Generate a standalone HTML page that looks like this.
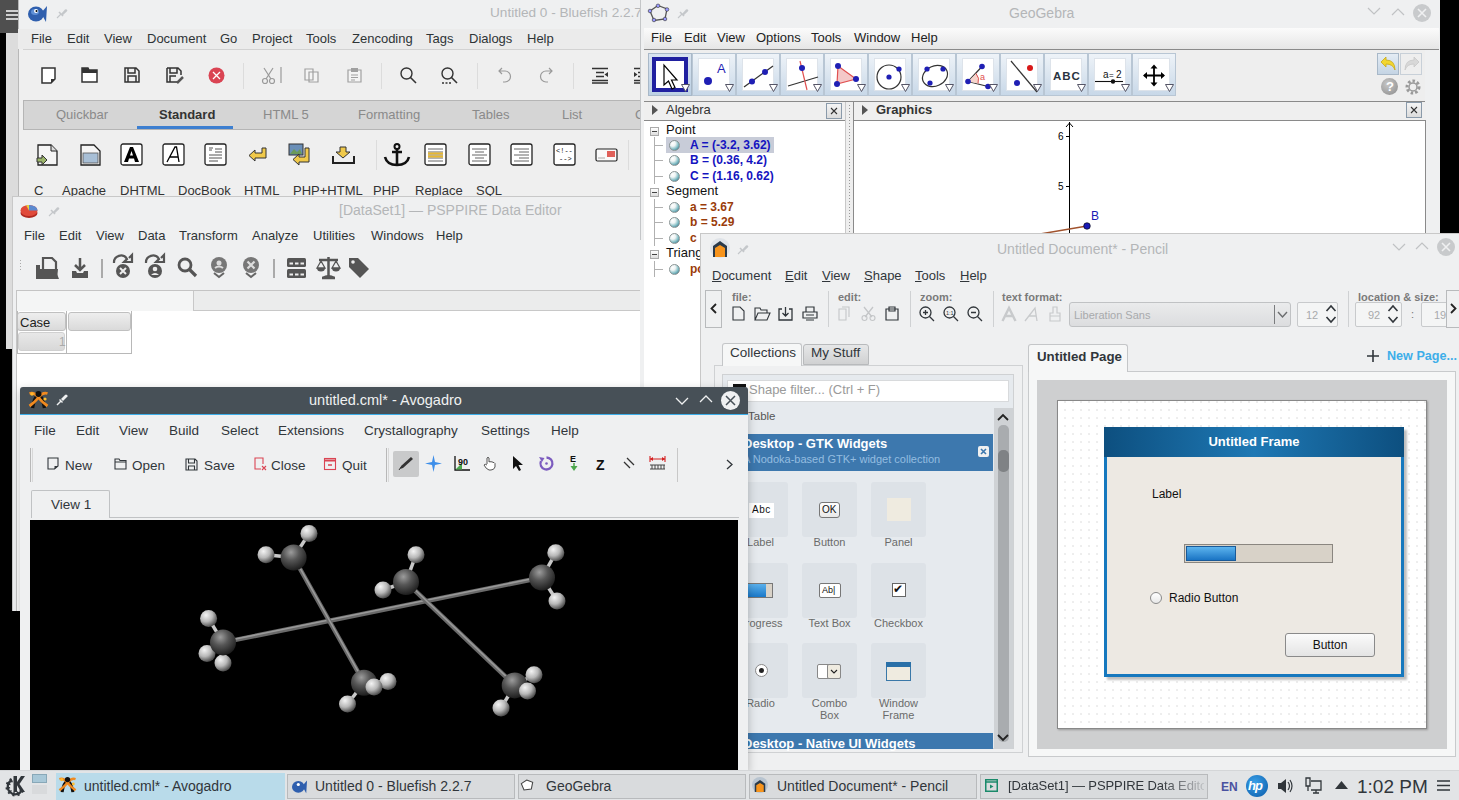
<!DOCTYPE html>
<html><head><meta charset="utf-8">
<style>
*{box-sizing:border-box;margin:0;padding:0}
html,body{width:1459px;height:800px;overflow:hidden;background:#000;-webkit-font-smoothing:antialiased;font-family:"Liberation Sans",sans-serif;color:#232627}
.a{position:absolute}
.win{position:absolute;overflow:hidden;background:#eff0f1}
.t{position:absolute;white-space:nowrap;line-height:1}
.menu span{position:absolute;white-space:nowrap;font-size:13px;line-height:1}
svg{position:absolute;overflow:visible}
</style></head><body>

<!-- top-left panel -->
<div class="a" style="left:0;top:0;width:19px;height:33px;background:#4f4f4f"></div>
<div class="a" style="left:6px;top:10px;width:12px;height:2px;background:#d0d0d0"></div>
<div class="a" style="left:6px;top:14px;width:12px;height:2px;background:#d0d0d0"></div>
<div class="a" style="left:6px;top:18px;width:12px;height:2px;background:#d0d0d0"></div>
<div class="a" style="left:6px;top:33px;width:13px;height:165px;background:#dcdcdc"></div><div class="a" style="left:6px;top:196px;width:6px;height:153px;background:#dcdcdc"></div>

<!-- BLUEFISH -->
<div class="win" id="bf" style="left:18px;top:0;width:640px;height:200px;background:#efefef">
 <div class="a" style="left:0;top:0;width:640px;height:29px;background:#eff0f1"></div>
 <div class="a" style="left:0;top:0;width:1px;height:200px;background:#b8b8b8"></div>
 <svg style="left:10px;top:4px" width="19" height="19" viewBox="0 0 19 19"><ellipse cx="8" cy="10" rx="8" ry="7.5" fill="#2f5fae"/><path d="M13 9 L19 2 L18 18 Z" fill="#2f5fae"/><ellipse cx="7" cy="8" rx="4" ry="3" fill="#5e8fd6"/><circle cx="8" cy="7" r="2" fill="#fff"/><circle cx="8.5" cy="7" r="1" fill="#000"/></svg>
 <svg style="left:38px;top:7px" width="12" height="12" viewBox="0 0 12 12"><path d="M1 11 L5 7" stroke="#c4c7ca" stroke-width="1.1"/><path d="M3 5 L7 9" stroke="#c4c7ca" stroke-width="1.6"/><path d="M5 7 L9 2.5 Q10 1.8 10.7 2.5 L11 2.8 Q11.7 3.6 11 4.3 L6.5 8.5 Z" fill="#c4c7ca"/></svg>
 <div class="t" style="left:472px;top:6px;font-size:13.6px;color:#b4b6b8">Untitled 0 - Bluefish 2.2.7</div>
 <div class="a" style="left:0;top:29px;width:640px;height:20px;background:#ebebeb"></div>
 <div class="a" style="left:5px;top:49px;width:640px;height:1px;background:#d2d2d2"></div>
 <div class="menu" style="color:#2e3436">
  <span style="left:13px;top:32px">File</span><span style="left:49px;top:32px">Edit</span><span style="left:86px;top:32px">View</span><span style="left:129px;top:32px">Document</span><span style="left:202px;top:32px">Go</span><span style="left:234px;top:32px">Project</span><span style="left:288px;top:32px">Tools</span><span style="left:334px;top:32px">Zencoding</span><span style="left:408px;top:32px">Tags</span><span style="left:451px;top:32px">Dialogs</span><span style="left:509px;top:32px">Help</span>
 </div>
 <!-- toolbar icons -->
 <svg style="left:23px;top:67px" width="16" height="17" viewBox="0 0 16 17"><path d="M1 1 H14 V12 L10 16 H1 Z" fill="#fff" stroke="#333" stroke-width="1.5"/><path d="M10 16 V12 H14 Z" fill="#333"/></svg>
 <svg style="left:63px;top:67px" width="17" height="16" viewBox="0 0 17 16"><path d="M1 1 H7 L8 3 H16 V15 H1 Z" fill="#fff" stroke="#333" stroke-width="1.5"/><path d="M1 1 H7 L8 3 H16 V6 H1 Z" fill="#333"/></svg>
 <svg style="left:106px;top:67px" width="16" height="16" viewBox="0 0 16 16"><path d="M1 1 H12 L15 4 V15 H1 Z M4 1 V6 H11 V1 M4 15 V9 H12 V15" fill="none" stroke="#333" stroke-width="1.5"/></svg>
 <svg style="left:148px;top:67px" width="19" height="17" viewBox="0 0 19 17"><path d="M1 1 H12 L15 4 V8 M11 15 H1 V1 M4 1 V6 H11 V1 M4 15 V9 H10" fill="none" stroke="#333" stroke-width="1.5"/><path d="M11 16 L17 10" stroke="#555" stroke-width="2.5"/></svg>
 <svg style="left:190px;top:67px" width="17" height="17" viewBox="0 0 17 17"><circle cx="8.5" cy="8.5" r="8" fill="#da4453"/><path d="M5 5 L12 12 M12 5 L5 12" stroke="#fff" stroke-width="1.3"/></svg>
 <div class="a" style="left:225px;top:63px;width:1px;height:26px;background:#dcdcdc"></div>
 <svg style="left:243px;top:67px" width="22" height="17" viewBox="0 0 22 17"><path d="M3 1 L10 12 M12 1 L5 12" stroke="#9a9a9a" stroke-width="1.2" fill="none"/><circle cx="4" cy="14" r="2.5" fill="none" stroke="#9a9a9a" stroke-width="1.2"/><circle cx="11" cy="14" r="2.5" fill="none" stroke="#9a9a9a" stroke-width="1.2"/><path d="M20 0 V16" stroke="#9a9a9a" stroke-width="1.2"/></svg>
 <svg style="left:286px;top:68px" width="15" height="15" viewBox="0 0 15 15"><path d="M1 1 H9 V12 H1 Z M5 4 H14 V14 H5 Z" fill="#f4f4f4" stroke="#a0a0a0" stroke-width="1.2"/></svg>
 <svg style="left:329px;top:67px" width="15" height="16" viewBox="0 0 15 16"><path d="M1 3 H14 V15 H1 Z" fill="#f4f4f4" stroke="#a0a0a0" stroke-width="1.2"/><path d="M4 1 H11 V5 H4 Z" fill="#a0a0a0"/><path d="M4 8 H11 M4 10.5 H11 M4 13 H8" stroke="#a0a0a0"/></svg>
 <div class="a" style="left:363px;top:63px;width:1px;height:26px;background:#dcdcdc"></div>
 <svg style="left:382px;top:67px" width="17" height="17" viewBox="0 0 17 17"><circle cx="6.5" cy="6.5" r="5.5" fill="none" stroke="#333" stroke-width="1.4"/><path d="M10.5 10.5 L16 16" stroke="#333" stroke-width="1.6"/></svg>
 <svg style="left:423px;top:67px" width="17" height="17" viewBox="0 0 17 17"><circle cx="6.5" cy="6.5" r="5.5" fill="none" stroke="#333" stroke-width="1.4"/><path d="M10.5 10.5 L16 16" stroke="#333" stroke-width="1.6"/><path d="M1 16 H10" stroke="#333" stroke-width="1.4" stroke-dasharray="2 1.5"/></svg>
 <div class="a" style="left:459px;top:63px;width:1px;height:26px;background:#dcdcdc"></div>
 <svg style="left:480px;top:67px" width="14" height="17" viewBox="0 0 14 17"><path d="M4 1 L1 4 L4 7 M1 4 H7 A5.5 5.5 0 0 1 7 15 H5" fill="none" stroke="#9a9a9a" stroke-width="1.2"/></svg>
 <svg style="left:521px;top:67px" width="14" height="17" viewBox="0 0 14 17"><path d="M10 1 L13 4 L10 7 M13 4 H7 A5.5 5.5 0 0 0 7 15 H9" fill="none" stroke="#9a9a9a" stroke-width="1.2"/></svg>
 <div class="a" style="left:555px;top:63px;width:1px;height:26px;background:#dcdcdc"></div>
 <svg style="left:574px;top:67px" width="17" height="17" viewBox="0 0 17 17"><path d="M0 1.5 H16 M4 5.5 H12 M4 9.5 H12 M0 13.5 H16 M0 16 H16" stroke="#333" stroke-width="1.3"/><path d="M16 5 L12.5 7.5 L16 10 Z" fill="#333"/></svg>
 <svg style="left:616px;top:67px" width="17" height="17" viewBox="0 0 17 17"><path d="M0 1.5 H16 M4 5.5 H16 M4 9.5 H16 M0 13.5 H16 M0 16 H16" stroke="#333" stroke-width="1.3"/><path d="M0 5 L3.5 7.5 L0 10 Z" fill="#333"/></svg>
 <!-- tab bar -->
 <div class="a" style="left:5px;top:100px;width:640px;height:30px;background:#d5d5d5;border:1px solid #b5b5b5;border-right:none"></div>
 <div class="a" style="left:119px;top:126px;width:96px;height:3px;background:#3d7fd0"></div>
 <div class="t" style="left:38px;top:108px;font-size:13px;color:#8a8a8a">Quickbar</div>
 <div class="t" style="left:141px;top:108px;font-size:13px;color:#333;font-weight:bold">Standard</div>
 <div class="t" style="left:245px;top:108px;font-size:13px;color:#8a8a8a">HTML 5</div>
 <div class="t" style="left:340px;top:108px;font-size:13px;color:#8a8a8a">Formatting</div>
 <div class="t" style="left:454px;top:108px;font-size:13px;color:#8a8a8a">Tables</div>
 <div class="t" style="left:544px;top:108px;font-size:13px;color:#8a8a8a">List</div>
 <div class="t" style="left:617px;top:108px;font-size:13px;color:#8a8a8a">C</div>
 <!-- icon row -->
 <svg style="left:18px;top:144px" width="23" height="23" viewBox="0 0 23 23"><path d="M2 1 H15 L21 7 V21 H2 Z" fill="#f5f5f5" stroke="#222" stroke-width="1.3"/><path d="M15 1 V7 H21" fill="#ddd" stroke="#222" stroke-width="1"/><path d="M1 14 H6 V11 L11 16 L6 21 V18 H1 Z" fill="#9bb56a" stroke="#333" stroke-width="1"/></svg>
 <svg style="left:62px;top:144px" width="21" height="23" viewBox="0 0 21 23"><path d="M1 1 H14 L20 7 V21 H1 Z" fill="#f5f5f5" stroke="#222" stroke-width="1.3"/><rect x="3" y="9" width="15" height="10" fill="#a8bfd6" stroke="#555" stroke-width=".8"/></svg>
 <svg style="left:102px;top:143px" width="23" height="23" viewBox="0 0 23 23"><rect x="1" y="1" width="21" height="21" rx="2" fill="#fff" stroke="#222" stroke-width="1.3"/><path d="M4 19 L10 4 H13 L19 19 H15 L14 15.5 H9 L8 19 Z M10 12.5 H13 L11.5 8 Z" fill="#000"/></svg>
 <svg style="left:144px;top:143px" width="23" height="23" viewBox="0 0 23 23"><rect x="1" y="1" width="21" height="21" rx="2" fill="#fff" stroke="#222" stroke-width="1.3"/><path d="M5 19 L13 4 H14.5 L17 19 M8 14 H16" fill="none" stroke="#000" stroke-width="1.3"/></svg>
 <svg style="left:186px;top:143px" width="23" height="23" viewBox="0 0 23 23"><rect x="1" y="1" width="21" height="21" rx="2" fill="#fff" stroke="#222" stroke-width="1.3"/><path d="M5 5 H9 M5 7 H8 M11 6 H18 M11 9 H18 M5 12 H18 M5 15 H18 M5 18 H14" stroke="#555" stroke-width="1"/></svg>
 <svg style="left:230px;top:147px" width="19" height="15" viewBox="0 0 19 15"><path d="M14 1 H18 V11 H7 V14 L1 8.5 L7 3 V6 H14 Z" fill="#f0c94a" stroke="#333" stroke-width="1"/></svg>
 <svg style="left:270px;top:143px" width="23" height="23" viewBox="0 0 23 23"><rect x="1" y="1" width="14" height="11" fill="#6a8fb8" stroke="#333" stroke-width="1"/><path d="M2 11 L6 6 L9 9 L12 6 L14 11 Z" fill="#6b9a5a"/><path d="M17 5 H21 V19 H11 V22 L5 16.5 L11 11 V14 H17 Z" fill="#f0c94a" stroke="#333" stroke-width="1"/></svg>
 <svg style="left:314px;top:146px" width="23" height="19" viewBox="0 0 23 19"><path d="M8 1 H14 V6 H18 L11 12 L4 6 H8 Z" fill="#f0c94a" stroke="#333" stroke-width="1"/><path d="M1 10 V17 H22 V10" fill="none" stroke="#222" stroke-width="2"/></svg>
 <div class="a" style="left:358px;top:140px;width:1px;height:30px;background:#dcdcdc"></div>
 <svg style="left:365px;top:143px" width="28" height="24" viewBox="0 0 28 24"><circle cx="14" cy="3.5" r="2.5" fill="none" stroke="#111" stroke-width="2"/><path d="M14 6 V22 M9 9 H19 M2 14 Q4 22 14 22 Q24 22 26 14" fill="none" stroke="#111" stroke-width="2.6"/></svg>
 <svg style="left:406px;top:143px" width="23" height="23" viewBox="0 0 23 23"><rect x="1" y="1" width="21" height="21" rx="2" fill="#fff" stroke="#222" stroke-width="1.3"/><path d="M4 6 H19 M4 9 H19 M4 12 H19 M4 15 H19 M4 18 H19" stroke="#666" stroke-width="1"/><path d="M4 10.5 H19 M4 13.5 H19" stroke="#e8b830" stroke-width="2"/></svg>
 <svg style="left:450px;top:143px" width="23" height="23" viewBox="0 0 23 23"><rect x="1" y="1" width="21" height="21" rx="2" fill="#fff" stroke="#222" stroke-width="1.3"/><path d="M4 6 H19 M7 9 H16 M4 12 H19 M7 15 H16 M4 18 H19" stroke="#666" stroke-width="1"/></svg>
 <svg style="left:492px;top:143px" width="23" height="23" viewBox="0 0 23 23"><rect x="1" y="1" width="21" height="21" rx="2" fill="#fff" stroke="#222" stroke-width="1.3"/><path d="M4 6 H19 M9 9 H19 M4 12 H19 M9 15 H19 M4 18 H19" stroke="#666" stroke-width="1"/></svg>
 <svg style="left:535px;top:143px" width="23" height="23" viewBox="0 0 23 23"><rect x="1" y="1" width="21" height="21" rx="2" fill="#fff" stroke="#222" stroke-width="1.3"/><text x="3" y="10" font-size="7" font-family="Liberation Mono" fill="#111">&lt;!--</text><text x="6" y="18" font-size="7" font-family="Liberation Mono" fill="#111">--&gt;</text></svg>
 <svg style="left:577px;top:148px" width="23" height="14" viewBox="0 0 23 14"><rect x="1" y="1" width="21" height="12" rx="1.5" fill="#fafafa" stroke="#222" stroke-width="1.2"/><rect x="12" y="3" width="8" height="6" fill="#e0605a"/><path d="M3 10 H10" stroke="#aaa"/></svg>
 <div class="a" style="left:610px;top:140px;width:1px;height:30px;background:#dcdcdc"></div>
 <div class="t" style="left:16px;top:184px;font-size:13px;color:#333">C</div>
 <div class="t" style="left:44px;top:184px;font-size:13px;color:#333">Apache</div>
 <div class="t" style="left:102px;top:184px;font-size:13px;color:#333">DHTML</div>
 <div class="t" style="left:160px;top:184px;font-size:13px;color:#333">DocBook</div>
 <div class="t" style="left:226px;top:184px;font-size:13px;color:#333">HTML</div>
 <div class="t" style="left:275px;top:184px;font-size:13px;color:#333">PHP+HTML</div>
 <div class="t" style="left:355px;top:184px;font-size:13px;color:#333">PHP</div>
 <div class="t" style="left:397px;top:184px;font-size:13px;color:#333">Replace</div>
 <div class="t" style="left:458px;top:184px;font-size:13px;color:#333">SQL</div>
</div>

<!-- GEOGEBRA -->
<div class="win" id="gg" style="left:640px;top:0;width:800px;height:400px;background:#eff0f1">
 <div class="a" style="left:0;top:0;width:1px;height:240px;background:#c4c6c8"></div>
 <svg style="left:8px;top:4px" width="21" height="18" viewBox="0 0 21 18"><path d="M10 1.5 L19 5 L17 15 L6 16.5 L2 7 Z" fill="none" stroke="#555" stroke-width="1.3"/><circle cx="10" cy="1.8" r="1.8" fill="#99f" stroke="#333" stroke-width=".6"/><circle cx="19" cy="5.5" r="1.8" fill="#99f" stroke="#333" stroke-width=".6"/><circle cx="17" cy="15" r="1.8" fill="#99f" stroke="#333" stroke-width=".6"/><circle cx="6" cy="16" r="1.8" fill="#99f" stroke="#333" stroke-width=".6"/><circle cx="2" cy="7" r="1.8" fill="#99f" stroke="#333" stroke-width=".6"/></svg>
 <svg style="left:37px;top:7px" width="12" height="12" viewBox="0 0 12 12"><path d="M1 11 L5 7" stroke="#c4c7ca" stroke-width="1.1"/><path d="M3 5 L7 9" stroke="#c4c7ca" stroke-width="1.6"/><path d="M5 7 L9 2.5 Q10 1.8 10.7 2.5 L11 2.8 Q11.7 3.6 11 4.3 L6.5 8.5 Z" fill="#c4c7ca"/></svg>
 <div class="t" style="left:369px;top:6px;font-size:14px;color:#b4b6b8">GeoGebra</div>
 <svg style="left:727px;top:7px" width="14" height="9" viewBox="0 0 14 9"><path d="M1 1 L7 7 L13 1" fill="none" stroke="#c0c2c4" stroke-width="1.2"/></svg>
 <svg style="left:751px;top:7px" width="14" height="9" viewBox="0 0 14 9"><path d="M1 8 L7 2 L13 8" fill="none" stroke="#c0c2c4" stroke-width="1.2"/></svg>
 <div class="a" style="left:773px;top:4px;width:18px;height:18px;border-radius:50%;background:#c8cacc"></div>
 <svg style="left:777px;top:8px" width="10" height="10" viewBox="0 0 10 10"><path d="M1 1 L9 9 M9 1 L1 9" stroke="#eff0f1" stroke-width="1.6"/></svg>
 <div class="a" style="left:4px;top:28px;width:795px;height:21px;background:linear-gradient(#fbfbfb,#e6e6e6)"></div>
 <div class="a" style="left:4px;top:49px;width:795px;height:1px;background:#8a8a8a"></div>
 <div class="menu" style="color:#222">
  <span style="left:11px;top:31px">File</span><span style="left:44px;top:31px">Edit</span><span style="left:77px;top:31px">View</span><span style="left:116px;top:31px">Options</span><span style="left:171px;top:31px">Tools</span><span style="left:214px;top:31px">Window</span><span style="left:271px;top:31px">Help</span>
 </div>
 <div class="a" style="left:4px;top:50px;width:781px;height:51px;background:#eeeeee"></div>
 <div class="a" style="left:8px;top:53px;width:44px;height:43px;background:linear-gradient(#d9e4f0,#bcd0e4);border:1px solid #a8b8c8"></div>
 <div class="a" style="left:12px;top:57px;width:36px;height:35px;background:#fff;border:4px solid #2020a0"></div>
 <svg style="left:12px;top:56px" width="36" height="38" viewBox="0 0 36 38"><path d="M12 9 V29 L16.5 25 L20 33 L23 31.5 L19.5 24 H25 Z" fill="#fff" stroke="#000" stroke-width="1.2"/></svg>
 <svg style="left:41px;top:84px" width="9" height="8" viewBox="0 0 9 8"><path d="M0.5 0.5 H8.5 L4.5 7.5 Z" fill="#fff" stroke="#556"/></svg>
 <div class="a" style="left:52px;top:53px;width:44px;height:43px;background:linear-gradient(#eef3f8,#c8d8e8);border:1px solid #b8c6d4"></div>
 <div class="a" style="left:58px;top:58px;width:32px;height:33px;background:#fff;border:1px solid #dde3ea"></div>
 <svg style="left:56px;top:56px" width="36" height="38" viewBox="0 0 36 38"><circle cx="12" cy="25" r="4" fill="#1f1fb4"/><text x="21" y="17" font-size="13" font-family="Liberation Sans" fill="#1f1fb4">A</text></svg>
 <svg style="left:85px;top:84px" width="9" height="8" viewBox="0 0 9 8"><path d="M0.5 0.5 H8.5 L4.5 7.5 Z" fill="#fff" stroke="#556"/></svg>
 <div class="a" style="left:96px;top:53px;width:44px;height:43px;background:linear-gradient(#eef3f8,#c8d8e8);border:1px solid #b8c6d4"></div>
 <div class="a" style="left:102px;top:58px;width:32px;height:33px;background:#fff;border:1px solid #dde3ea"></div>
 <svg style="left:100px;top:56px" width="36" height="38" viewBox="0 0 36 38"><path d="M4 31 L33 10" stroke="#333" stroke-width="1.2"/><circle cx="12" cy="25.5" r="3" fill="#1f1fb4"/><circle cx="25" cy="16" r="3" fill="#1f1fb4"/></svg>
 <svg style="left:129px;top:84px" width="9" height="8" viewBox="0 0 9 8"><path d="M0.5 0.5 H8.5 L4.5 7.5 Z" fill="#fff" stroke="#556"/></svg>
 <div class="a" style="left:140px;top:53px;width:44px;height:43px;background:linear-gradient(#eef3f8,#c8d8e8);border:1px solid #b8c6d4"></div>
 <div class="a" style="left:146px;top:58px;width:32px;height:33px;background:#fff;border:1px solid #dde3ea"></div>
 <svg style="left:144px;top:56px" width="36" height="38" viewBox="0 0 36 38"><path d="M4 30 L34 21" stroke="#333" stroke-width="1.2"/><path d="M16 5 L23 34" stroke="#e05050" stroke-width="1.2"/><circle cx="18" cy="12" r="3" fill="#1f1fb4"/></svg>
 <svg style="left:173px;top:84px" width="9" height="8" viewBox="0 0 9 8"><path d="M0.5 0.5 H8.5 L4.5 7.5 Z" fill="#fff" stroke="#556"/></svg>
 <div class="a" style="left:184px;top:53px;width:44px;height:43px;background:linear-gradient(#eef3f8,#c8d8e8);border:1px solid #b8c6d4"></div>
 <div class="a" style="left:190px;top:58px;width:32px;height:33px;background:#fff;border:1px solid #dde3ea"></div>
 <svg style="left:188px;top:56px" width="36" height="38" viewBox="0 0 36 38"><path d="M10 10 L28 23 L9 28 Z" fill="#f4c8c8" stroke="#e05050" stroke-width="1.2"/><circle cx="10" cy="10" r="3" fill="#1f1fb4"/><circle cx="28" cy="23" r="3" fill="#1f1fb4"/><circle cx="9" cy="28" r="3" fill="#1f1fb4"/></svg>
 <svg style="left:217px;top:84px" width="9" height="8" viewBox="0 0 9 8"><path d="M0.5 0.5 H8.5 L4.5 7.5 Z" fill="#fff" stroke="#556"/></svg>
 <div class="a" style="left:228px;top:53px;width:44px;height:43px;background:linear-gradient(#eef3f8,#c8d8e8);border:1px solid #b8c6d4"></div>
 <div class="a" style="left:234px;top:58px;width:32px;height:33px;background:#fff;border:1px solid #dde3ea"></div>
 <svg style="left:232px;top:56px" width="36" height="38" viewBox="0 0 36 38"><circle cx="17" cy="21" r="12" fill="none" stroke="#333" stroke-width="1.2"/><circle cx="17" cy="21" r="2.6" fill="#1f1fb4"/><circle cx="27" cy="13" r="2.6" fill="#1f1fb4"/></svg>
 <svg style="left:261px;top:84px" width="9" height="8" viewBox="0 0 9 8"><path d="M0.5 0.5 H8.5 L4.5 7.5 Z" fill="#fff" stroke="#556"/></svg>
 <div class="a" style="left:272px;top:53px;width:44px;height:43px;background:linear-gradient(#eef3f8,#c8d8e8);border:1px solid #b8c6d4"></div>
 <div class="a" style="left:278px;top:58px;width:32px;height:33px;background:#fff;border:1px solid #dde3ea"></div>
 <svg style="left:276px;top:56px" width="36" height="38" viewBox="0 0 36 38"><ellipse cx="19" cy="20" rx="13" ry="10" transform="rotate(-25 19 20)" fill="none" stroke="#333" stroke-width="1.2"/><circle cx="11" cy="13" r="2.6" fill="#1f1fb4"/><circle cx="27" cy="13" r="2.6" fill="#1f1fb4"/><circle cx="14" cy="27" r="2.6" fill="#1f1fb4"/></svg>
 <svg style="left:305px;top:84px" width="9" height="8" viewBox="0 0 9 8"><path d="M0.5 0.5 H8.5 L4.5 7.5 Z" fill="#fff" stroke="#556"/></svg>
 <div class="a" style="left:316px;top:53px;width:44px;height:43px;background:linear-gradient(#eef3f8,#c8d8e8);border:1px solid #b8c6d4"></div>
 <div class="a" style="left:322px;top:58px;width:32px;height:33px;background:#fff;border:1px solid #dde3ea"></div>
 <svg style="left:320px;top:56px" width="36" height="38" viewBox="0 0 36 38"><g transform="translate(0,1.5)"><path d="M22 9 L8 24 L28 29" fill="none" stroke="#333" stroke-width="1.2"/><path d="M8 24 L16 16 A10 10 0 0 1 18 26 Z" fill="#f6d4cc"/><path d="M16 16 A10 10 0 0 1 18 26" fill="none" stroke="#e05050"/><text x="20" y="22" font-size="9" fill="#e05050" font-family="Liberation Sans">a</text><circle cx="22" cy="9" r="2.8" fill="#1f1fb4"/><circle cx="8" cy="24" r="2.8" fill="#1f1fb4"/><circle cx="28" cy="29" r="2.8" fill="#1f1fb4"/></g></svg>
 <svg style="left:349px;top:84px" width="9" height="8" viewBox="0 0 9 8"><path d="M0.5 0.5 H8.5 L4.5 7.5 Z" fill="#fff" stroke="#556"/></svg>
 <div class="a" style="left:360px;top:53px;width:44px;height:43px;background:linear-gradient(#eef3f8,#c8d8e8);border:1px solid #b8c6d4"></div>
 <div class="a" style="left:366px;top:58px;width:32px;height:33px;background:#fff;border:1px solid #dde3ea"></div>
 <svg style="left:364px;top:56px" width="36" height="38" viewBox="0 0 36 38"><path d="M7 5 L33 36" stroke="#333" stroke-width="1.2"/><circle cx="26" cy="12" r="3" fill="#d81818"/><circle cx="13" cy="27" r="3" fill="#1f1fb4"/></svg>
 <svg style="left:393px;top:84px" width="9" height="8" viewBox="0 0 9 8"><path d="M0.5 0.5 H8.5 L4.5 7.5 Z" fill="#fff" stroke="#556"/></svg>
 <div class="a" style="left:404px;top:53px;width:44px;height:43px;background:linear-gradient(#eef3f8,#c8d8e8);border:1px solid #b8c6d4"></div>
 <div class="a" style="left:410px;top:58px;width:32px;height:33px;background:#fff;border:1px solid #dde3ea"></div>
 <svg style="left:408px;top:56px" width="36" height="38" viewBox="0 0 36 38"><text x="5" y="23.5" font-size="11.5" font-family="Liberation Sans" font-weight="bold" letter-spacing="1" fill="#2a3340">ABC</text></svg>
 <svg style="left:437px;top:84px" width="9" height="8" viewBox="0 0 9 8"><path d="M0.5 0.5 H8.5 L4.5 7.5 Z" fill="#fff" stroke="#556"/></svg>
 <div class="a" style="left:448px;top:53px;width:44px;height:43px;background:linear-gradient(#eef3f8,#c8d8e8);border:1px solid #b8c6d4"></div>
 <div class="a" style="left:454px;top:58px;width:32px;height:33px;background:#fff;border:1px solid #dde3ea"></div>
 <svg style="left:452px;top:56px" width="36" height="38" viewBox="0 0 36 38"><text x="11" y="22" font-size="10" font-family="Liberation Sans" fill="#111">a</text><text x="17" y="22" font-size="8" font-family="Liberation Sans" fill="#111">=</text><text x="24" y="22" font-size="10" font-family="Liberation Sans" fill="#111">2</text><path d="M3 25.5 H31" stroke="#111" stroke-width="1.1"/><circle cx="21" cy="25.5" r="2.2" fill="#111"/></svg>
 <svg style="left:481px;top:84px" width="9" height="8" viewBox="0 0 9 8"><path d="M0.5 0.5 H8.5 L4.5 7.5 Z" fill="#fff" stroke="#556"/></svg>
 <div class="a" style="left:492px;top:53px;width:44px;height:43px;background:linear-gradient(#eef3f8,#c8d8e8);border:1px solid #b8c6d4"></div>
 <div class="a" style="left:498px;top:58px;width:32px;height:33px;background:#fff;border:1px solid #dde3ea"></div>
 <svg style="left:496px;top:56px" width="36" height="38" viewBox="0 0 36 38"><path d="M18 10 V29 M8.5 19.5 H27.5" stroke="#000" stroke-width="1.8"/><path d="M18 8.5 L14.5 12.5 H21.5 Z M18 30.5 L14.5 26.5 H21.5 Z M7 19.5 L11 16 V23 Z M29 19.5 L25 16 V23 Z" fill="#000"/></svg>
 <svg style="left:525px;top:84px" width="9" height="8" viewBox="0 0 9 8"><path d="M0.5 0.5 H8.5 L4.5 7.5 Z" fill="#fff" stroke="#556"/></svg>
 <!-- undo/redo -->
 <div class="a" style="left:737px;top:53px;width:22px;height:22px;background:linear-gradient(#e4ecf4,#c4d4e4);border:1px solid #a8b8c8"></div>
 <svg style="left:740px;top:56px" width="17" height="16" viewBox="0 0 17 16"><path d="M6 1 L1 6 L6 11 V8 Q13 8 15 14 Q15 4 6 4 Z" fill="#f2d630" stroke="#c8a818" stroke-width=".8"/></svg>
 <div class="a" style="left:760px;top:53px;width:22px;height:22px;background:#eeeeee;border:1px solid #c8d0d8"></div>
 <svg style="left:763px;top:56px" width="17" height="16" viewBox="0 0 17 16"><path d="M11 1 L16 6 L11 11 V8 Q4 8 2 14 Q2 4 11 4 Z" fill="#d8d8d8" stroke="#c8c8c8" stroke-width=".8"/></svg>
 <div class="a" style="left:741px;top:78px;width:17px;height:17px;border-radius:50%;background:radial-gradient(circle at 40% 35%,#c8c8c8,#8a8a8a)"></div>
 <div class="t" style="left:746px;top:80px;font-size:13px;font-weight:bold;color:#fff">?</div>
 <svg style="left:764px;top:78px" width="18" height="18" viewBox="0 0 18 18"><circle cx="9" cy="9" r="6" fill="none" stroke="#9a9a9a" stroke-width="3" stroke-dasharray="2.5 2"/><circle cx="9" cy="9" r="4" fill="none" stroke="#9a9a9a" stroke-width="1.5"/></svg>
 <div class="a" style="left:4px;top:101px;width:781px;height:1px;background:#8a8a8a"></div>
 <!-- algebra header -->
 <div class="a" style="left:4px;top:102px;width:201px;height:18px;background:#efefef"></div>
 <svg style="left:12px;top:105px" width="6" height="10" viewBox="0 0 6 10"><path d="M0 0 L6 5 L0 10 Z" fill="#555"/></svg>
 <div class="t" style="left:26px;top:103px;font-size:13px;color:#333">Algebra</div>
 <div class="a" style="left:186px;top:103px;width:16px;height:16px;border:1px solid #8a9aaa;background:linear-gradient(#f4f4f4,#dcdcdc)"></div>
 <svg style="left:190px;top:107px" width="8" height="8" viewBox="0 0 8 8"><path d="M1 1 L7 7 M7 1 L1 7" stroke="#333" stroke-width="1.1"/></svg>
 <div class="a" style="left:4px;top:120px;width:201px;height:1px;background:#8a8a8a"></div>
 <div class="a" style="left:4px;top:121px;width:201px;height:290px;background:#fff"></div>
 <div class="a" style="left:10px;top:127px;width:9px;height:9px;border:1px solid #aaa;background:linear-gradient(#fff,#ddd)"></div><div class="a" style="left:12px;top:131px;width:5px;height:1px;background:#444"></div>
 <div class="t" style="left:26px;top:123px;font-size:13px;color:#111">Point</div>
 <div class="a" style="left:26px;top:137px;width:108px;height:16px;background:#c8ccd8"></div>
 <div class="a" style="left:14px;top:137px;width:1px;height:16px;background:#b0b0b0"></div><div class="a" style="left:14px;top:145px;width:9px;height:1px;background:#b0b0b0"></div>
 <div class="a" style="left:29px;top:140px;width:11px;height:11px;border-radius:50%;background:radial-gradient(circle at 30% 28%,#fff 0,#eef4f4 30%,#7ab8c0 65%,#1f5f80 100%);border:1px solid #8a9494"></div>
 <div class="t" style="left:50px;top:139px;font-size:12px;font-weight:bold;color:#1414c0">A = (-3.2, 3.62)</div>
 <div class="a" style="left:14px;top:152px;width:1px;height:16px;background:#b0b0b0"></div><div class="a" style="left:14px;top:160px;width:9px;height:1px;background:#b0b0b0"></div>
 <div class="a" style="left:29px;top:155px;width:11px;height:11px;border-radius:50%;background:radial-gradient(circle at 30% 28%,#fff 0,#eef4f4 30%,#7ab8c0 65%,#1f5f80 100%);border:1px solid #8a9494"></div>
 <div class="t" style="left:50px;top:154px;font-size:12px;font-weight:bold;color:#1414c0">B = (0.36, 4.2)</div>
 <div class="a" style="left:14px;top:168px;width:1px;height:16px;background:#b0b0b0"></div><div class="a" style="left:14px;top:176px;width:9px;height:1px;background:#b0b0b0"></div>
 <div class="a" style="left:29px;top:171px;width:11px;height:11px;border-radius:50%;background:radial-gradient(circle at 30% 28%,#fff 0,#eef4f4 30%,#7ab8c0 65%,#1f5f80 100%);border:1px solid #8a9494"></div>
 <div class="t" style="left:50px;top:170px;font-size:12px;font-weight:bold;color:#1414c0">C = (1.16, 0.62)</div>
 <div class="a" style="left:10px;top:188px;width:9px;height:9px;border:1px solid #aaa;background:linear-gradient(#fff,#ddd)"></div><div class="a" style="left:12px;top:192px;width:5px;height:1px;background:#444"></div>
 <div class="t" style="left:26px;top:184px;font-size:13px;color:#111">Segment</div>
 <div class="a" style="left:14px;top:199px;width:1px;height:16px;background:#b0b0b0"></div><div class="a" style="left:14px;top:207px;width:9px;height:1px;background:#b0b0b0"></div>
 <div class="a" style="left:29px;top:202px;width:11px;height:11px;border-radius:50%;background:radial-gradient(circle at 30% 28%,#fff 0,#eef4f4 30%,#7ab8c0 65%,#1f5f80 100%);border:1px solid #8a9494"></div>
 <div class="t" style="left:50px;top:201px;font-size:12px;font-weight:bold;color:#9a3c0a">a = 3.67</div>
 <div class="a" style="left:14px;top:214px;width:1px;height:16px;background:#b0b0b0"></div><div class="a" style="left:14px;top:222px;width:9px;height:1px;background:#b0b0b0"></div>
 <div class="a" style="left:29px;top:217px;width:11px;height:11px;border-radius:50%;background:radial-gradient(circle at 30% 28%,#fff 0,#eef4f4 30%,#7ab8c0 65%,#1f5f80 100%);border:1px solid #8a9494"></div>
 <div class="t" style="left:50px;top:216px;font-size:12px;font-weight:bold;color:#9a3c0a">b = 5.29</div>
 <div class="a" style="left:14px;top:230px;width:1px;height:16px;background:#b0b0b0"></div><div class="a" style="left:14px;top:238px;width:9px;height:1px;background:#b0b0b0"></div>
 <div class="a" style="left:29px;top:233px;width:11px;height:11px;border-radius:50%;background:radial-gradient(circle at 30% 28%,#fff 0,#eef4f4 30%,#7ab8c0 65%,#1f5f80 100%);border:1px solid #8a9494"></div>
 <div class="t" style="left:50px;top:232px;font-size:12px;font-weight:bold;color:#9a3c0a">c = 4.01</div>
 <div class="a" style="left:10px;top:250px;width:9px;height:9px;border:1px solid #aaa;background:linear-gradient(#fff,#ddd)"></div><div class="a" style="left:12px;top:254px;width:5px;height:1px;background:#444"></div>
 <div class="t" style="left:26px;top:246px;font-size:13px;color:#111">Triangle</div>
 <div class="a" style="left:14px;top:261px;width:1px;height:16px;background:#b0b0b0"></div><div class="a" style="left:14px;top:269px;width:9px;height:1px;background:#b0b0b0"></div>
 <div class="a" style="left:29px;top:264px;width:11px;height:11px;border-radius:50%;background:radial-gradient(circle at 30% 28%,#fff 0,#eef4f4 30%,#7ab8c0 65%,#1f5f80 100%);border:1px solid #8a9494"></div>
 <div class="t" style="left:50px;top:263px;font-size:12px;font-weight:bold;color:#9a3c0a">poly1 = 9.56</div>
 <!-- splitter -->
 <div class="a" style="left:205px;top:102px;width:8px;height:300px;background:#eeeeee;border-left:1px solid #c8c8c8"></div>
 <div class="a" style="left:208px;top:104px;width:3px;height:296px;background-image:radial-gradient(#999 0.6px,transparent 0.8px);background-size:3px 3px"></div>
 <div class="a" style="left:213px;top:102px;width:573px;height:18px;background:#efefef;border-left:1px solid #8a8a8a"></div>
 <svg style="left:222px;top:105px" width="6" height="10" viewBox="0 0 6 10"><path d="M0 0 L6 5 L0 10 Z" fill="#555"/></svg>
 <div class="t" style="left:236px;top:103px;font-size:13px;font-weight:bold;color:#333">Graphics</div>
 <div class="a" style="left:766px;top:102px;width:16px;height:16px;border:1px solid #8a9aaa;background:linear-gradient(#f4f4f4,#dcdcdc)"></div>
 <svg style="left:770px;top:106px" width="8" height="8" viewBox="0 0 8 8"><path d="M1 1 L7 7 M7 1 L1 7" stroke="#333" stroke-width="1.1"/></svg>
 <div class="a" style="left:213px;top:120px;width:573px;height:1px;background:#8a8a8a"></div>
 <div class="a" style="left:213px;top:121px;width:573px;height:120px;background:#fff;border-left:1px solid #8a8a8a;border-right:1px solid #8a8a8a"></div>
 <svg style="left:380px;top:121px" width="120" height="120" viewBox="0 0 120 120">
  <path d="M49.5 1 V120" stroke="#000" stroke-width="1"/><path d="M46 6 L49.5 2 L53 6" fill="none" stroke="#000" stroke-width="1"/>
  <path d="M46 15.5 H49.5 M46 65.5 H49.5" stroke="#000"/>
  <text x="38" y="19" font-size="10" font-family="Liberation Sans" fill="#000">6</text>
  <text x="38" y="69" font-size="10" font-family="Liberation Sans" fill="#000">5</text>
  <path d="M20 113 L67 105" stroke="#a0522d" stroke-width="1.3"/>
  <circle cx="67" cy="105" r="3.3" fill="#1a1ab4" stroke="#000" stroke-width=".6"/>
  <text x="71" y="99" font-size="12" font-family="Liberation Sans" fill="#1a1ab4">B</text>
 </svg>
 <div class="a" style="left:786px;top:50px;width:14px;height:190px;background:#eff0f1"></div>
</div>

<!-- PSPP -->
<div class="win" id="ps" style="left:12px;top:196px;width:628px;height:415px;background:#eff0f1;box-shadow:inset 1px 1px 0 #c8c8c8">
 <svg style="left:8px;top:6px" width="19" height="17" viewBox="0 0 19 17"><ellipse cx="9" cy="11" rx="8.5" ry="5" fill="#b02a20"/><ellipse cx="9" cy="8.5" rx="8.5" ry="5.5" fill="#e04a3a"/><path d="M9 8.5 L9 3 A8.5 5.5 0 0 1 17.5 8.5 Z" fill="#5b8ad0"/><path d="M9 8.5 L6 3.2 A8.5 5.5 0 0 1 9 3 Z" fill="#e8d040"/></svg>
 <svg style="left:36px;top:9px" width="12" height="12" viewBox="0 0 12 12"><path d="M1 11 L5 7" stroke="#c4c7ca" stroke-width="1.1"/><path d="M3 5 L7 9" stroke="#c4c7ca" stroke-width="1.6"/><path d="M5 7 L9 2.5 Q10 1.8 10.7 2.5 L11 2.8 Q11.7 3.6 11 4.3 L6.5 8.5 Z" fill="#c4c7ca"/></svg>
 <div class="t" style="left:327px;top:7px;font-size:14px;color:#b4b6b8">[DataSet1] — PSPPIRE Data Editor</div>
 <div class="menu" style="color:#2e3436">
  <span style="left:12px;top:33px">File</span><span style="left:47px;top:33px">Edit</span><span style="left:84px;top:33px">View</span><span style="left:126px;top:33px">Data</span><span style="left:167px;top:33px">Transform</span><span style="left:240px;top:33px">Analyze</span><span style="left:301px;top:33px">Utilities</span><span style="left:359px;top:33px">Windows</span><span style="left:424px;top:33px">Help</span>
 </div>
 <div class="a" style="left:7px;top:63px;width:3px;height:13px;background-image:radial-gradient(#aaa 0.6px,transparent 0.8px);background-size:3px 3px"></div>
 <svg style="left:23px;top:61px" width="25" height="23" viewBox="0 0 25 23"><path d="M8 1 H17 L21 5 V14 H8 Z" fill="none" stroke="#555" stroke-width="2.2"/><path d="M1 8 H5 V17 H22 L24 22 H1 Z" fill="#555"/><path d="M5 12 H23 L22 22 H5 Z" fill="#555"/></svg>
 <svg style="left:59px;top:61px" width="18" height="22" viewBox="0 0 18 22"><path d="M9 1 V12 M4 8 L9 13 L14 8" stroke="#555" stroke-width="2.5" fill="none"/><path d="M1 14 H5 L6 16 H12 L13 14 H17 V21 H1 Z" fill="#555"/></svg>
 <div class="a" style="left:89px;top:63px;width:2px;height:19px;background:#aaa"></div>
 <svg style="left:99px;top:58px" width="23" height="25" viewBox="0 0 23 25"><path d="M3 9 A7 7 0 0 1 16 5 L13 8 H21 V1 L18 4" fill="none" stroke="#555" stroke-width="2.2"/><circle cx="12" cy="17" r="7" fill="#555"/><path d="M9 14 L15 20 M15 14 L9 20" stroke="#eee" stroke-width="2"/></svg>
 <svg style="left:131px;top:58px" width="23" height="25" viewBox="0 0 23 25"><path d="M3 9 A7 7 0 0 1 16 5 L13 8 H21 V1 L18 4" fill="none" stroke="#555" stroke-width="2.2"/><circle cx="12" cy="17" r="7" fill="#555"/><circle cx="12" cy="15" r="2.3" fill="#eee"/><path d="M8 21 Q12 17 16 21" fill="#eee"/></svg>
 <svg style="left:165px;top:61px" width="21" height="21" viewBox="0 0 21 21"><circle cx="8" cy="8" r="6" fill="none" stroke="#555" stroke-width="2.8"/><path d="M12.5 12.5 L19 19" stroke="#555" stroke-width="3.2"/></svg>
 <svg style="left:198px;top:60px" width="18" height="23" viewBox="0 0 18 23"><circle cx="9" cy="9" r="8" fill="#777"/><circle cx="9" cy="7" r="2.5" fill="#ddd"/><path d="M5 12 Q9 9 13 12" stroke="#ddd" stroke-width="2" fill="none"/><path d="M4 17 L9 21 L14 17" stroke="#666" stroke-width="2" fill="none"/></svg>
 <svg style="left:230px;top:60px" width="18" height="23" viewBox="0 0 18 23"><circle cx="9" cy="9" r="8" fill="#777"/><path d="M5.5 5.5 L12.5 12.5 M12.5 5.5 L5.5 12.5" stroke="#ddd" stroke-width="2.2"/><path d="M4 17 L9 21 L14 17" stroke="#666" stroke-width="2" fill="none"/></svg>
 <div class="a" style="left:261px;top:63px;width:2px;height:19px;background:#aaa"></div>
 <svg style="left:274px;top:61px" width="21" height="22" viewBox="0 0 21 22"><rect x="1" y="1" width="19" height="9" rx="1.5" fill="#555"/><rect x="1" y="12" width="19" height="9" rx="1.5" fill="#555"/><path d="M3.5 6.5 H7 M9 6.5 H12.5 M14.5 6.5 H18 M3.5 17.5 H7 M9 17.5 H12.5 M14.5 17.5 H18" stroke="#eee" stroke-width="2"/></svg>
 <svg style="left:304px;top:60px" width="25" height="23" viewBox="0 0 25 23"><path d="M12.5 1 V20 M3 4 H22 M6 22 H19" stroke="#555" stroke-width="2.5"/><path d="M5 5 L1 12 H9 Z M20 5 L16 12 H24 Z" fill="none" stroke="#555" stroke-width="1.3"/><path d="M1 12 A4 3.5 0 0 0 9 12 Z M16 12 A4 3.5 0 0 0 24 12 Z" fill="#555"/><path d="M6 21 Q12.5 17 19 21 Z" fill="#555"/></svg>
 <svg style="left:336px;top:61px" width="22" height="21" viewBox="0 0 22 21"><path d="M1 1 H10 L21 12 L12 21 L1 10 Z" fill="#555"/><circle cx="5" cy="5" r="1.8" fill="#eee"/></svg>
 <!-- data area -->
 <div class="a" style="left:4px;top:94px;width:640px;height:330px;background:#fff;border:1px solid #c4c4c4"></div>
 <div class="a" style="left:5px;top:95px;width:176px;height:20px;background:#f4f5f5"></div>
 <div class="a" style="left:181px;top:95px;width:460px;height:20px;background:#ebecec;border-left:1px solid #c8c8c8;border-bottom:1px solid #c8c8c8"></div>
 <div class="a" style="left:5px;top:115px;width:115px;height:43px;border:1px solid #b8b8b8;border-top:none"></div>
 <div class="a" style="left:54px;top:115px;width:1px;height:43px;background:#b8b8b8"></div>
 <div class="a" style="left:5px;top:116px;width:49px;height:19px;border-radius:3px;background:linear-gradient(#eeeeee,#dadada);border:1px solid #c0c0c0"></div>
 <div class="t" style="left:8px;top:120px;font-size:13px;color:#222">Case</div>
 <div class="a" style="left:56px;top:116px;width:63px;height:19px;border-radius:3px;background:linear-gradient(#eeeeee,#dadada);border:1px solid #c0c0c0"></div>
 <div class="a" style="left:6px;top:136px;width:47px;height:19px;border-radius:3px;background:linear-gradient(#e8e8e8,#d8d8d8);border:1px solid #d0d0d0"></div>
 <div class="t" style="left:47px;top:140px;font-size:12px;color:#aaa">1</div>
</div>

<!-- PENCIL -->
<div class="win" id="pc" style="left:700px;top:233px;width:759px;height:537px;background:#eff0f1;box-shadow:inset 1px 1px 0 #c8c8c8">
 <div class="a" style="left:10px;top:5px;width:20px;height:20px;border-radius:50%;background:#dfe3e8"></div>
 <svg style="left:12px;top:7px" width="16" height="18" viewBox="0 0 16 18"><path d="M8 1 L15 6 V17 H1 V6 Z" fill="#2a3a4a"/><path d="M3 8 L8 5 L13 8 V17 H3 Z" fill="#f7941d"/></svg>
 <svg style="left:37px;top:10px" width="12" height="12" viewBox="0 0 12 12"><path d="M1 11 L5 7" stroke="#c4c7ca" stroke-width="1.1"/><path d="M3 5 L7 9" stroke="#c4c7ca" stroke-width="1.6"/><path d="M5 7 L9 2.5 Q10 1.8 10.7 2.5 L11 2.8 Q11.7 3.6 11 4.3 L6.5 8.5 Z" fill="#c4c7ca"/></svg>
 <div class="t" style="left:297px;top:9px;font-size:14px;color:#b4b6b8">Untitled Document* - Pencil</div>
 <svg style="left:692px;top:10px" width="14" height="8" viewBox="0 0 14 8"><path d="M1 1 L7 7 L13 1" fill="none" stroke="#c0c2c4" stroke-width="1.2"/></svg>
 <svg style="left:715px;top:9px" width="14" height="8" viewBox="0 0 14 8"><path d="M1 7 L7 1 L13 7" fill="none" stroke="#c0c2c4" stroke-width="1.2"/></svg>
 <div class="a" style="left:737px;top:5px;width:18px;height:18px;border-radius:50%;background:#c8cacc"></div>
 <svg style="left:741px;top:9px" width="10" height="10" viewBox="0 0 10 10"><path d="M1 1 L9 9 M9 1 L1 9" stroke="#eff0f1" stroke-width="1.6"/></svg>
 <div class="menu" style="color:#31363b">
  <span style="left:12px;top:36px"><u>D</u>ocument</span><span style="left:85px;top:36px"><u>E</u>dit</span><span style="left:122px;top:36px"><u>V</u>iew</span><span style="left:164px;top:36px"><u>S</u>hape</span><span style="left:215px;top:36px"><u>T</u>ools</span><span style="left:260px;top:36px"><u>H</u>elp</span>
 </div>
 <div class="a" style="left:5px;top:57px;width:17px;height:38px;border:1px solid #b8babc;background:#eff0f1"></div>
 <svg style="left:10px;top:70px" width="7" height="11" viewBox="0 0 7 11"><path d="M6 1 L1.5 5.5 L6 10" fill="none" stroke="#222" stroke-width="1.8"/></svg>
 <div class="t" style="left:32px;top:59px;font-size:11px;font-weight:bold;color:#7a7a7a">file:</div>
 <svg style="left:32px;top:73px" width="13" height="15" viewBox="0 0 13 15"><path d="M1 1 H8 L12 5 V14 H1 Z" fill="none" stroke="#31363b" stroke-width="1.1"/></svg>
 <svg style="left:54px;top:74px" width="17" height="14" viewBox="0 0 17 14"><path d="M1 13 V1 H6 L7 3 H13 V6 M1 13 L4 6 H16 L13 13 Z" fill="none" stroke="#31363b" stroke-width="1.1"/></svg>
 <svg style="left:78px;top:73px" width="15" height="15" viewBox="0 0 15 15"><path d="M4 3 H1 V14 H14 V3 H11 M7.5 1 V10 M4.5 7 L7.5 10 L10.5 7" fill="none" stroke="#31363b" stroke-width="1.3"/></svg>
 <svg style="left:102px;top:73px" width="16" height="15" viewBox="0 0 16 15"><path d="M4 6 V1 H12 V6 M1 6 H15 V12 H1 Z M4 9 H12 M4 14 H12" fill="none" stroke="#31363b" stroke-width="1.2"/></svg>
 <div class="a" style="left:128px;top:58px;width:1px;height:36px;background:#cfd1d3"></div>
 <div class="t" style="left:138px;top:59px;font-size:11px;font-weight:bold;color:#7a7a7a">edit:</div>
 <svg style="left:138px;top:73px" width="13" height="15" viewBox="0 0 13 15"><path d="M1 3 H8 V14 H1 Z M4 1 H11 V11" fill="none" stroke="#c4c6c8" stroke-width="1.1"/></svg>
 <svg style="left:161px;top:73px" width="15" height="15" viewBox="0 0 15 15"><path d="M3 1 L11 11 M12 1 L4 11" stroke="#c4c6c8" stroke-width="1.3"/><circle cx="3.5" cy="12" r="2.5" fill="none" stroke="#c4c6c8" stroke-width="1.1"/><circle cx="11.5" cy="12" r="2.5" fill="none" stroke="#c4c6c8" stroke-width="1.1"/></svg>
 <svg style="left:185px;top:73px" width="14" height="15" viewBox="0 0 14 15"><path d="M1 3 H13 V14 H1 Z M4 1 H10 V5 H4 Z" fill="none" stroke="#31363b" stroke-width="1.2"/></svg>
 <div class="a" style="left:210px;top:58px;width:1px;height:36px;background:#cfd1d3"></div>
 <div class="t" style="left:220px;top:59px;font-size:11px;font-weight:bold;color:#7a7a7a">zoom:</div>
 <svg style="left:219px;top:73px" width="16" height="16" viewBox="0 0 16 16"><circle cx="6.5" cy="6.5" r="5.5" fill="none" stroke="#31363b" stroke-width="1.3"/><path d="M10.5 10.5 L15 15 M4 6.5 H9 M6.5 4 V9" stroke="#31363b" stroke-width="1.3"/></svg>
 <svg style="left:243px;top:73px" width="16" height="16" viewBox="0 0 16 16"><circle cx="6.5" cy="6.5" r="5.5" fill="none" stroke="#31363b" stroke-width="1.3"/><path d="M10.5 10.5 L15 15" stroke="#31363b" stroke-width="1.3"/><text x="3" y="8.5" font-size="5.5" font-family="Liberation Sans" fill="#31363b">1:1</text></svg>
 <svg style="left:267px;top:73px" width="16" height="16" viewBox="0 0 16 16"><circle cx="6.5" cy="6.5" r="5.5" fill="none" stroke="#31363b" stroke-width="1.3"/><path d="M10.5 10.5 L15 15 M4 6.5 H9" stroke="#31363b" stroke-width="1.3"/></svg>
 <div class="a" style="left:293px;top:58px;width:1px;height:36px;background:#cfd1d3"></div>
 <div class="t" style="left:302px;top:59px;font-size:11px;font-weight:bold;color:#7a7a7a">text format:</div>
 <svg style="left:301px;top:74px" width="16" height="15" viewBox="0 0 16 15"><path d="M1.5 14 L8 1 L14.5 14 M4 9 H12" fill="none" stroke="#c8cacc" stroke-width="2.4"/></svg>
 <svg style="left:324px;top:74px" width="16" height="15" viewBox="0 0 16 15"><path d="M1 14 L11 1 L13 14 M5 9 H12" fill="none" stroke="#c8cacc" stroke-width="1.3"/></svg>
 <svg style="left:349px;top:73px" width="12" height="16" viewBox="0 0 12 16"><path d="M4 1 H8 V7 H11 V15 H1 V7 H4 Z M1 10 H11" fill="none" stroke="#c8cacc" stroke-width="1.2"/></svg>
 <div class="a" style="left:369px;top:69px;width:222px;height:25px;border:1px solid #c0c2c4;border-radius:3px;background:linear-gradient(#eaebec,#dcdddf)"></div>
 <div class="t" style="left:374px;top:77px;font-size:11px;color:#a8aaac">Liberation Sans</div>
 <div class="a" style="left:574px;top:72px;width:1px;height:19px;background:#7a7c7e"></div>
 <svg style="left:577px;top:78px" width="11" height="7" viewBox="0 0 11 7"><path d="M1 1 L5.5 6 L10 1" fill="none" stroke="#6a6c6e" stroke-width="1.4"/></svg>
 <div class="a" style="left:597px;top:69px;width:41px;height:25px;border:1px solid #c8cacc;border-radius:2px;background:#f4f5f5"></div>
 <div class="t" style="left:606px;top:77px;font-size:11px;color:#a8aaac">12</div>
 <svg style="left:625px;top:70px" width="12" height="22" viewBox="0 0 12 22"><path d="M1.5 8 L6 3 L10.5 8 M1.5 14 L6 19 L10.5 14" fill="none" stroke="#31363b" stroke-width="1.6"/></svg>
 <div class="a" style="left:648px;top:58px;width:1px;height:36px;background:#cfd1d3"></div>
 <div class="t" style="left:658px;top:59px;font-size:11px;font-weight:bold;color:#7a7a7a">location &amp; size:</div>
 <div class="a" style="left:655px;top:69px;width:47px;height:25px;border:1px solid #c8cacc;border-radius:2px;background:#f4f5f5"></div>
 <div class="t" style="left:668px;top:77px;font-size:11px;color:#a8aaac">92</div>
 <svg style="left:687px;top:70px" width="12" height="22" viewBox="0 0 12 22"><path d="M1.5 8 L6 3 L10.5 8 M1.5 14 L6 19 L10.5 14" fill="none" stroke="#31363b" stroke-width="1.6"/></svg>
 <div class="t" style="left:711px;top:76px;font-size:11px;color:#777">:</div>
 <div class="a" style="left:721px;top:69px;width:30px;height:25px;border:1px solid #c8cacc;border-radius:2px;background:#f4f5f5"></div>
 <div class="t" style="left:734px;top:77px;font-size:11px;color:#a8aaac">19</div>
 <div class="a" style="left:746px;top:57px;width:17px;height:38px;border:1px solid #b8babc;background:#eff0f1"></div>
 <svg style="left:750px;top:70px" width="7" height="11" viewBox="0 0 7 11"><path d="M1 1 L5.5 5.5 L1 10" fill="none" stroke="#222" stroke-width="1.8"/></svg>
 <!-- left panel -->
 <div class="a" style="left:14px;top:132px;width:309px;height:388px;border:1px solid #cfd1d3;background:#eff0f1"></div>
 <div class="a" style="left:22px;top:110px;width:80px;height:23px;border:1px solid #c4c6c8;border-bottom:none;border-radius:3px 3px 0 0;background:#f6f7f7"></div>
 <div class="t" style="left:30px;top:113px;font-size:13.5px;color:#31363b">Collections</div>
 <div class="a" style="left:103px;top:111px;width:66px;height:21px;border:1px solid #b8babc;border-radius:3px 3px 0 0;background:linear-gradient(#e6e7e8,#d0d1d2)"></div>
 <div class="t" style="left:111px;top:113px;font-size:13.5px;color:#31363b">My Stuff</div>
 <div class="a" style="left:22px;top:141px;width:292px;height:375px;border:1px solid #cfd1d3;background:#e6eaee"></div>
 <div class="a" style="left:27px;top:147px;width:282px;height:22px;border:1px solid #d8dadc;background:#fff"></div>
 <div class="a" style="left:33px;top:151px;width:13px;height:13px;background:#111"></div>
 <div class="t" style="left:49px;top:150px;font-size:13px;color:#9a9a9a">Shape filter... (Ctrl + F)</div>
 <div class="t" style="left:48px;top:178px;font-size:11.5px;color:#555">Table</div>
 <div class="a" style="left:23px;top:201px;width:270px;height:37px;background:#3d78ae"></div>
 <div class="t" style="left:43px;top:204px;font-size:13px;font-weight:bold;color:#fff">Desktop - GTK Widgets</div>
 <div class="t" style="left:43px;top:221px;font-size:11px;color:#94bde0">A Nodoka-based GTK+ widget collection</div>
 <div class="a" style="left:278px;top:213px;width:11px;height:11px;border-radius:2px;background:#f0f0f0"></div>
 <svg style="left:280px;top:215px" width="7" height="7" viewBox="0 0 7 7"><path d="M1 1 L6 6 M6 1 L1 6" stroke="#3d78ae" stroke-width="1.6"/></svg>
 <!--TILES--><div class="a" style="left:33px;top:249px;width:55px;height:55px;background:#dde2e7;border-radius:3px"></div>
 <div class="t" style="left:33px;top:303px;width:55px;text-align:center;font-size:11px;line-height:12px;color:#6a6a6a;white-space:normal">Label</div>
 <div class="a" style="left:102px;top:249px;width:55px;height:55px;background:#dde2e7;border-radius:3px"></div>
 <div class="t" style="left:102px;top:303px;width:55px;text-align:center;font-size:11px;line-height:12px;color:#6a6a6a;white-space:normal">Button</div>
 <div class="a" style="left:171px;top:249px;width:55px;height:55px;background:#dde2e7;border-radius:3px"></div>
 <div class="t" style="left:171px;top:303px;width:55px;text-align:center;font-size:11px;line-height:12px;color:#6a6a6a;white-space:normal">Panel</div>
 <div class="a" style="left:33px;top:330px;width:55px;height:55px;background:#dde2e7;border-radius:3px"></div>
 <div class="t" style="left:33px;top:384px;width:55px;text-align:center;font-size:11px;line-height:12px;color:#6a6a6a;white-space:normal">Progress</div>
 <div class="a" style="left:102px;top:330px;width:55px;height:55px;background:#dde2e7;border-radius:3px"></div>
 <div class="t" style="left:102px;top:384px;width:55px;text-align:center;font-size:11px;line-height:12px;color:#6a6a6a;white-space:normal">Text Box</div>
 <div class="a" style="left:171px;top:330px;width:55px;height:55px;background:#dde2e7;border-radius:3px"></div>
 <div class="t" style="left:171px;top:384px;width:55px;text-align:center;font-size:11px;line-height:12px;color:#6a6a6a;white-space:normal">Checkbox</div>
 <div class="a" style="left:33px;top:410px;width:55px;height:55px;background:#dde2e7;border-radius:3px"></div>
 <div class="t" style="left:33px;top:464px;width:55px;text-align:center;font-size:11px;line-height:12px;color:#6a6a6a;white-space:normal">Radio</div>
 <div class="a" style="left:102px;top:410px;width:55px;height:55px;background:#dde2e7;border-radius:3px"></div>
 <div class="t" style="left:102px;top:464px;width:55px;text-align:center;font-size:11px;line-height:12px;color:#6a6a6a;white-space:normal">Combo<br>Box</div>
 <div class="a" style="left:171px;top:410px;width:55px;height:55px;background:#dde2e7;border-radius:3px"></div>
 <div class="t" style="left:171px;top:464px;width:55px;text-align:center;font-size:11px;line-height:12px;color:#6a6a6a;white-space:normal">Window<br>Frame</div>
 <div class="a" style="left:49px;top:270px;width:25px;height:15px;background:#fff"></div><div class="t" style="left:52px;top:272px;font-size:10px;color:#111;letter-spacing:.5px">Abc</div>
 <div class="a" style="left:119px;top:269px;width:21px;height:16px;background:linear-gradient(#fff,#e8e8e8);border:1px solid #777;border-radius:3px"></div><div class="t" style="left:122px;top:272px;font-size:10px;color:#111">OK</div>
 <div class="a" style="left:187px;top:265px;width:24px;height:23px;background:#efebe0"></div>
 <div class="a" style="left:44px;top:350px;width:29px;height:15px;background:#d8d2c8;border:1px solid #777"></div><div class="a" style="left:45px;top:351px;width:21px;height:13px;background:linear-gradient(#5ab0ec,#1a78c8)"></div>
 <div class="a" style="left:119px;top:350px;width:22px;height:15px;background:#fff;border:1px solid #777;border-radius:2px"></div><div class="t" style="left:122px;top:353px;font-size:9px;color:#111">Ab|</div>
 <div class="a" style="left:192px;top:350px;width:14px;height:14px;background:#fff;border:1px solid #666"></div><div class="t" style="left:193px;top:350px;font-size:12px;color:#111">✔</div>
 <div class="a" style="left:55px;top:431px;width:13px;height:13px;border-radius:50%;background:#fff;border:1px solid #888"></div><div class="a" style="left:59px;top:435px;width:5px;height:5px;border-radius:50%;background:#222"></div>
 <div class="a" style="left:117px;top:431px;width:24px;height:15px;background:#fff;border:1px solid #888;border-radius:2px"></div><div class="a" style="left:127px;top:431px;width:14px;height:15px;background:#efebe0;border:1px solid #888;border-radius:2px"></div><svg style="left:130px;top:436px" width="8" height="5" viewBox="0 0 8 5"><path d="M1 1 L4 4 L7 1" fill="none" stroke="#222" stroke-width="1.1"/></svg>
 <div class="a" style="left:186px;top:429px;width:25px;height:19px;background:#efebe0;border:1px solid #3a78a8"></div><div class="a" style="left:186px;top:429px;width:25px;height:5px;background:#2a70a8"></div><!--/TILES-->
 <div class="a" style="left:23px;top:500px;width:270px;height:16px;background:#3d78ae"></div>
 <div class="t" style="left:43px;top:504px;font-size:13px;font-weight:bold;color:#fff">Desktop - Native UI Widgets</div>
 <div class="a" style="left:294px;top:175px;width:19px;height:341px;background:#cfd2d5"></div>
 <div class="a" style="left:298px;top:192px;width:11px;height:317px;border-radius:5px;background:#a9acaf"></div>
 <div class="a" style="left:298px;top:217px;width:11px;height:22px;border-radius:5px;background:#7f8285"></div>
 <svg style="left:297px;top:180px" width="12" height="8" viewBox="0 0 12 8"><path d="M1 7 L6 2 L11 7" fill="none" stroke="#222" stroke-width="1.8"/></svg>
 <svg style="left:297px;top:501px" width="12" height="8" viewBox="0 0 12 8"><path d="M1 1 L6 6 L11 1" fill="none" stroke="#222" stroke-width="1.8"/></svg>
 <!-- right canvas -->
 <div class="a" style="left:328px;top:138px;width:428px;height:386px;border:1px solid #c8cacc;background:#f6f7f7"></div>
 <div class="a" style="left:328px;top:111px;width:100px;height:28px;border:1px solid #c4c6c8;border-bottom:none;border-radius:3px 3px 0 0;background:#f6f7f7"></div>
 <div class="t" style="left:337px;top:117px;font-size:13.3px;font-weight:bold;color:#31363b">Untitled Page</div>
 <svg style="left:667px;top:117px" width="12" height="12" viewBox="0 0 12 12"><path d="M6 0 V12 M0 6 H12" stroke="#31363b" stroke-width="1.6"/></svg>
 <div class="t" style="left:687px;top:117px;font-size:12.6px;font-weight:bold;color:#3daee9">New Page...</div>
 <div class="a" style="left:337px;top:147px;width:410px;height:369px;background:#cecfd0"></div>
 <div class="a" style="left:357px;top:167px;width:370px;height:329px;background-color:#fff;background-image:radial-gradient(#e8e8e8 0.6px,transparent 1px);background-size:8px 8px;background-position:3px 5px;border:1px solid #888;box-shadow:1px 1px 2px #999"></div>
 <div class="a" style="left:404px;top:194px;width:300px;height:250px;background:#ede9e3;border:3px solid #1678be;box-shadow:3px 3px 2px rgba(0,0,0,.25)"></div>
 <div class="a" style="left:404px;top:194px;width:300px;height:30px;background:linear-gradient(90deg,#0d4f7f,#1e78b4 50%,#0d4f7f)"></div>
 <div class="t" style="left:404px;top:202px;width:300px;text-align:center;font-size:13px;font-weight:bold;color:#fff">Untitled Frame</div>
 <div class="t" style="left:452px;top:255px;font-size:12px;color:#111">Label</div>
 <div class="a" style="left:484px;top:311px;width:149px;height:19px;background:#d8d2c8;border:1px solid #8a8680"></div>
 <div class="a" style="left:486px;top:313px;width:50px;height:15px;background:linear-gradient(#5cb4ee,#1a74c4);border:1px solid #1a5a98"></div>
 <div class="a" style="left:450px;top:359px;width:12px;height:12px;border-radius:50%;background:linear-gradient(#fff,#e8e8e8);border:1px solid #8a8a8a"></div>
 <div class="t" style="left:469px;top:359px;font-size:12px;color:#111">Radio Button</div>
 <div class="a" style="left:585px;top:400px;width:90px;height:24px;border-radius:3px;background:linear-gradient(#fbfbfb,#e4e4e4);border:1px solid #8a8a8a"></div>
 <div class="t" style="left:585px;top:406px;width:90px;text-align:center;font-size:12px;color:#111">Button</div>
</div>

<!-- AVOGADRO -->
<div class="win" id="av" style="left:20px;top:387px;width:728px;height:384px;background:#eff0f1;border-radius:3px 3px 0 0;box-shadow:0 3px 10px 0 rgba(0,0,0,.25)">
 <div class="a" style="left:0;top:0;width:729px;height:27px;background:#475057"></div>
 <div class="a" style="left:0;top:27px;width:729px;height:1px;background:#3daee9"></div>
 <svg style="left:8px;top:3px" width="21" height="19" viewBox="0 0 21 19"><path d="M4.5 18 Q6 8 10.5 5 Q15 8 16.5 18" fill="none" stroke="#111" stroke-width="3.4"/><path d="M1.5 3.5 Q6 2 10 7 Q14 12 19.5 16 M19.5 3.5 Q15 2 11 7 Q7 12 1.5 16" fill="none" stroke="#f08a20" stroke-width="2.8"/><circle cx="10.5" cy="4" r="3" fill="#111"/><circle cx="4" cy="4" r="1.8" fill="#ffb830"/><circle cx="17" cy="9" r="1.6" fill="#ffc030"/></svg>
 <svg style="left:36px;top:6px" width="13" height="13" viewBox="0 0 13 13"><path d="M1 12 L5 8" stroke="#eff0f1" stroke-width="1.4"/><path d="M3.5 6.5 L6.5 9.5" stroke="#eff0f1" stroke-width="1.4"/><path d="M5 6 L9 2 Q10 1 11 2 L11.5 2.5 Q12 3.5 11 4 L7 8 Z" fill="#eff0f1"/></svg>
 <div class="t" style="left:289px;top:6px;font-size:14.5px;color:#eff0f1">untitled.cml* - Avogadro</div>
 <svg style="left:655px;top:10px" width="14" height="8" viewBox="0 0 14 8"><path d="M1 1 L7 7 L13 1" fill="none" stroke="#eff0f1" stroke-width="1.3"/></svg>
 <svg style="left:679px;top:8px" width="14" height="8" viewBox="0 0 14 8"><path d="M1 7 L7 1 L13 7" fill="none" stroke="#eff0f1" stroke-width="1.3"/></svg>
 <div class="a" style="left:701px;top:4px;width:19px;height:19px;border-radius:50%;background:#eff0f1"></div>
 <svg style="left:705px;top:8px" width="11" height="11" viewBox="0 0 11 11"><path d="M1 1 L10 10 M10 1 L1 10" stroke="#475057" stroke-width="1.5"/></svg>
 <div class="menu" style="color:#31363b">
  <span style="left:14px;top:37px;font-size:13.5px">File</span><span style="left:56px;top:37px;font-size:13.5px">Edit</span><span style="left:99px;top:37px;font-size:13.5px">View</span><span style="left:149px;top:37px;font-size:13.5px">Build</span><span style="left:201px;top:37px;font-size:13.5px">Select</span><span style="left:258px;top:37px;font-size:13.5px">Extensions</span><span style="left:344px;top:37px;font-size:13.5px">Crystallography</span><span style="left:461px;top:37px;font-size:13.5px">Settings</span><span style="left:531px;top:37px;font-size:13.5px">Help</span>
 </div>
 <div class="a" style="left:10px;top:61px;width:1px;height:34px;background:#b8b8b8"></div><div class="a" style="left:12px;top:61px;width:1px;height:34px;background:#d8d8d8"></div>
 <svg style="left:27px;top:70px" width="12" height="13" viewBox="0 0 12 13"><path d="M1 1 H11 V9 L7.5 12 H1 Z" fill="none" stroke="#31363b" stroke-width="1.1"/><path d="M7.5 12 V9 H11 Z" fill="#31363b"/></svg>
 <div class="t" style="left:45px;top:72px;font-size:13.5px;color:#31363b">New</div>
 <svg style="left:94px;top:71px" width="13" height="12" viewBox="0 0 13 12"><path d="M1 1 H5 L6 2.5 H12 V11 H1 Z M1 4 H12" fill="none" stroke="#31363b" stroke-width="1.1"/></svg>
 <div class="t" style="left:112px;top:72px;font-size:13.5px;color:#31363b">Open</div>
 <svg style="left:165px;top:71px" width="13" height="13" viewBox="0 0 13 13"><path d="M1 1 H10 L12 3 V12 H1 Z M3.5 1 V5 H9.5 V1 M3.5 12 V8 H9.5 V12" fill="none" stroke="#31363b" stroke-width="1.1"/></svg>
 <div class="t" style="left:184px;top:72px;font-size:13.5px;color:#31363b">Save</div>
 <svg style="left:234px;top:70px" width="13" height="14" viewBox="0 0 13 14"><path d="M7 12 H1 V1 H9 V7" fill="none" stroke="#da4453" stroke-width="1.1"/><path d="M8 9 L12 13 M12 9 L8 13" stroke="#da4453" stroke-width="1.1"/></svg>
 <div class="t" style="left:251px;top:72px;font-size:13.5px;color:#31363b">Close</div>
 <svg style="left:304px;top:71px" width="12" height="12" viewBox="0 0 12 12"><rect x="0.5" y="0.5" width="11" height="11" fill="none" stroke="#da4453" stroke-width="1.1"/><path d="M0.5 2.5 H11.5" stroke="#da4453" stroke-width="2"/><path d="M4 7 H8" stroke="#da4453" stroke-width="1.6"/></svg>
 <div class="t" style="left:322px;top:72px;font-size:13.5px;color:#31363b">Quit</div>
 <div class="a" style="left:366px;top:61px;width:1px;height:34px;background:#b8b8b8"></div><div class="a" style="left:368px;top:61px;width:1px;height:34px;background:#d8d8d8"></div>
 <div class="a" style="left:373px;top:64px;width:26px;height:26px;border-radius:2px;background:#c9cacb"></div>
 <svg style="left:378px;top:68px" width="17" height="16" viewBox="0 0 17 16"><path d="M2 14 L3 11 L13 2 L15 4 L5 13 Z" fill="#333"/><path d="M1 15 L3 12" stroke="#333"/></svg>
 <svg style="left:405px;top:68px" width="17" height="17" viewBox="0 0 17 17"><path d="M8.5 0 L10 7 L17 8.5 L10 10 L8.5 17 L7 10 L0 8.5 L7 7 Z" fill="#3d8ee9"/></svg>
 <svg style="left:434px;top:68px" width="16" height="16" viewBox="0 0 16 16"><path d="M1 1 V15 H16" fill="none" stroke="#111" stroke-width="1.3"/><path d="M1.5 14.5 L8 8 V14.5 Z" fill="#4ca64c"/><text x="4" y="10" font-size="9" font-weight="bold" font-family="Liberation Sans" fill="#111">90</text></svg>
 <svg style="left:463px;top:69px" width="14" height="15" viewBox="0 0 14 15"><path d="M4 8 V2 Q5 0.5 6 2 V6 Q7 5 8 6 Q9 5 10 6.5 Q11 6 12 7.5 V11 Q11 14 8 14 H6 Q3 13 1 9 Q2 7.5 4 9" fill="#fff" stroke="#555" stroke-width="1"/></svg>
 <svg style="left:492px;top:68px" width="12" height="17" viewBox="0 0 12 17"><path d="M1 1 V14 L4 11 L7 16 L9 15 L6.5 10 H11 Z" fill="#111"/></svg>
 <svg style="left:519px;top:69px" width="15" height="15" viewBox="0 0 15 15"><path d="M7.5 1.5 A6 6 0 1 1 2 5" fill="none" stroke="#7c5cbf" stroke-width="2.3"/><path d="M0 1 L5.5 2 L3 6 Z" fill="#7c5cbf"/><circle cx="7.5" cy="7.5" r="1.3" fill="#7c5cbf"/></svg>
 <svg style="left:548px;top:67px" width="12" height="18" viewBox="0 0 12 18"><text x="2" y="8" font-size="9" font-weight="bold" font-family="Liberation Sans" fill="#111">E</text><path d="M6 9 V15" stroke="#4ca64c" stroke-width="1.5"/><path d="M2.5 12 L6 17 L9.5 12 Z" fill="#4ca64c"/></svg>
 <div class="t" style="left:576px;top:71px;font-size:14px;font-weight:bold;color:#111">Z</div>
 <svg style="left:603px;top:69px" width="13" height="13" viewBox="0 0 13 13"><path d="M1 6 L7 12 M4 2 L11 9" stroke="#333" stroke-width="1.3"/></svg>
 <svg style="left:629px;top:68px" width="17" height="16" viewBox="0 0 17 16"><path d="M1 1 V7 M16 1 V7 M1 4 H16" stroke="#d42020" stroke-width="1.1"/><path d="M1 4 L4 2 V6 Z M16 4 L13 2 V6 Z" fill="#d42020"/><path d="M1 10 H16 M1 14 H16 M3 10 V14 M6 10 V14 M9 10 V14 M12 10 V14 M15 10 V14" stroke="#444" stroke-width="1"/></svg>
 <div class="a" style="left:657px;top:61px;width:1px;height:34px;background:#c8c8c8"></div>
 <svg style="left:706px;top:72px" width="7" height="11" viewBox="0 0 7 11"><path d="M1 1 L6 5.5 L1 10" fill="none" stroke="#31363b" stroke-width="1.3"/></svg>
 <!-- tab -->
 <div class="a" style="left:11px;top:103px;width:79px;height:28px;background:#eff0f1;border:1px solid #c0c2c4;border-bottom:none;border-radius:2px 2px 0 0"></div>
 <div class="a" style="left:90px;top:130px;width:629px;height:1px;background:#c0c2c4"></div>
 <div class="t" style="left:31px;top:111px;font-size:13.5px;color:#31363b">View 1</div>
 <div class="a" style="left:10px;top:133px;width:708px;height:250px;background:#000"></div>
 <svg style="left:10px;top:133px" width="708" height="250" viewBox="0 0 708 250"><defs><radialGradient id="gc" cx="40%" cy="30%" r="70%"><stop offset="0" stop-color="#9c9c9c"/><stop offset="0.45" stop-color="#565656"/><stop offset="1" stop-color="#1e1e1e"/></radialGradient><radialGradient id="gh" cx="35%" cy="30%" r="70%"><stop offset="0" stop-color="#f4f4f4"/><stop offset="0.55" stop-color="#b8b8b8"/><stop offset="1" stop-color="#505050"/></radialGradient><linearGradient id="gb" x1="0" y1="0" x2="0" y2="1"><stop offset="0" stop-color="#9a9a9a"/><stop offset="1" stop-color="#4a4a4a"/></linearGradient></defs><path d="M263.6 37.5 L279.0 13.6" stroke="#c8c8c8" stroke-width="3.5"/><path d="M263.6 37.5 L236.0 34.7" stroke="#c8c8c8" stroke-width="3.5"/><path d="M376.0 62.0 L386.0 34.7" stroke="#c8c8c8" stroke-width="3.5"/><path d="M376.0 62.0 L353.0 70.0" stroke="#c8c8c8" stroke-width="3.5"/><path d="M512.0 57.5 L525.8 32.8" stroke="#c8c8c8" stroke-width="3.5"/><path d="M512.0 57.5 L527.0 81.0" stroke="#c8c8c8" stroke-width="3.5"/><path d="M193.0 122.4 L178.6 98.6" stroke="#c8c8c8" stroke-width="3.5"/><path d="M193.0 122.4 L177.0 133.4" stroke="#c8c8c8" stroke-width="3.5"/><path d="M193.0 122.4 L193.0 143.0" stroke="#c8c8c8" stroke-width="3.5"/><path d="M334.0 162.7 L358.0 161.6" stroke="#c8c8c8" stroke-width="3.5"/><path d="M334.0 162.7 L344.0 167.0" stroke="#c8c8c8" stroke-width="3.5"/><path d="M334.0 162.7 L317.5 184.0" stroke="#c8c8c8" stroke-width="3.5"/><path d="M484.7 165.4 L504.0 154.7" stroke="#c8c8c8" stroke-width="3.5"/><path d="M484.7 165.4 L497.5 171.0" stroke="#c8c8c8" stroke-width="3.5"/><path d="M484.7 165.4 L471.0 188.0" stroke="#c8c8c8" stroke-width="3.5"/><path d="M193.0 122.4 L512.0 57.5" stroke="#6a6a6a" stroke-width="4.5"/><path d="M193.0 121.6 L512.0 56.7" stroke="#9a9a9a" stroke-width="1.5"/><path d="M263.6 37.5 L334.0 162.7" stroke="#6a6a6a" stroke-width="4.5"/><path d="M263.6 36.7 L334.0 161.9" stroke="#9a9a9a" stroke-width="1.5"/><path d="M376.0 62.0 L484.7 165.4" stroke="#6a6a6a" stroke-width="4.5"/><path d="M376.0 61.2 L484.7 164.6" stroke="#9a9a9a" stroke-width="1.5"/><circle cx="279.0" cy="13.6" r="8.5" fill="url(#gh)"/><circle cx="236.0" cy="34.7" r="8.5" fill="url(#gh)"/><circle cx="386.0" cy="34.7" r="8.5" fill="url(#gh)"/><circle cx="353.0" cy="70.0" r="8.5" fill="url(#gh)"/><circle cx="525.8" cy="32.8" r="8.5" fill="url(#gh)"/><circle cx="527.0" cy="81.0" r="8.5" fill="url(#gh)"/><circle cx="178.6" cy="98.6" r="8.5" fill="url(#gh)"/><circle cx="177.0" cy="133.4" r="8.5" fill="url(#gh)"/><circle cx="193.0" cy="143.0" r="8.5" fill="url(#gh)"/><circle cx="358.0" cy="161.6" r="8.5" fill="url(#gh)"/><circle cx="317.5" cy="184.0" r="8.5" fill="url(#gh)"/><circle cx="504.0" cy="154.7" r="8.5" fill="url(#gh)"/><circle cx="471.0" cy="188.0" r="8.5" fill="url(#gh)"/><circle cx="263.6" cy="37.5" r="13" fill="url(#gc)"/><circle cx="376.0" cy="62.0" r="13" fill="url(#gc)"/><circle cx="512.0" cy="57.5" r="13" fill="url(#gc)"/><circle cx="193.0" cy="122.4" r="13" fill="url(#gc)"/><circle cx="334.0" cy="162.7" r="13" fill="url(#gc)"/><circle cx="484.7" cy="165.4" r="13" fill="url(#gc)"/><circle cx="344.0" cy="167.0" r="8.5" fill="url(#gh)"/><circle cx="497.5" cy="171.0" r="8.5" fill="url(#gh)"/></svg>
</div>

<!-- TASKBAR -->
<div class="a" id="tb" style="left:0;top:770px;width:1459px;height:30px;background:#e2e4e6;border-top:1px solid #d4d6d8">
 <svg style="left:5px;top:4px" width="20" height="21" viewBox="0 0 20 21"><path d="M7 5 A7.5 7.5 0 1 0 17 15" fill="none" stroke="#31363b" stroke-width="2.2"/><path d="M7 5 A7.5 7.5 0 1 0 17 15" fill="none" stroke="#31363b" stroke-width="4.5" stroke-dasharray="1.8 2.6"/><path d="M8.5 1 H12 V17 H8.5 Z" fill="#31363b"/><path d="M11 8.5 L16 1 H20 L14.5 9 L20 17 H16 Z" fill="#31363b"/></svg>
 <div class="a" style="left:32px;top:3px;width:15px;height:9px;background:#a8c8d8;border:1px solid #88a8b8"></div>
 <div class="a" style="left:32px;top:14px;width:15px;height:9px;background:#d8dadc"></div>
 <div class="a" style="left:56px;top:2px;width:229px;height:27px;background:#b9dbea"></div>
 <svg style="left:58px;top:5px" width="19" height="17" viewBox="0 0 21 19"><path d="M4.5 18 Q6 8 10.5 5 Q15 8 16.5 18" fill="none" stroke="#111" stroke-width="3.4"/><path d="M1.5 3.5 Q6 2 10 7 Q14 12 19.5 16 M19.5 3.5 Q15 2 11 7 Q7 12 1.5 16" fill="none" stroke="#f08a20" stroke-width="2.8"/><circle cx="10.5" cy="4" r="3" fill="#111"/><circle cx="4" cy="4" r="1.8" fill="#ffb830"/><circle cx="17" cy="9" r="1.6" fill="#ffc030"/></svg>
 <div class="t" style="left:84px;top:8px;font-size:14px;color:#31363b">untitled.cml* - Avogadro</div>
 <div class="a" style="left:287px;top:3px;width:228px;height:25px;background:#d9dbdd;border:1px solid #b8babc"></div>
 <svg style="left:292px;top:8px" width="15" height="15" viewBox="0 0 19 19"><ellipse cx="8" cy="10" rx="8" ry="7.5" fill="#2f5fae"/><path d="M13 9 L19 2 L18 18 Z" fill="#2f5fae"/><circle cx="8" cy="7" r="2" fill="#fff"/></svg>
 <div class="t" style="left:315px;top:8px;font-size:14px;color:#31363b">Untitled 0 - Bluefish 2.2.7</div>
 <div class="a" style="left:518px;top:3px;width:228px;height:25px;background:#d9dbdd;border:1px solid #b8babc"></div>
 <svg style="left:520px;top:7px" width="14" height="14" viewBox="0 0 21 18"><path d="M10 1.5 L19 5 L17 15 L6 16.5 L2 7 Z" fill="#fff" stroke="#444" stroke-width="1.6"/></svg>
 <div class="t" style="left:546px;top:8px;font-size:14px;color:#31363b">GeoGebra</div>
 <div class="a" style="left:749px;top:3px;width:228px;height:25px;background:#d9dbdd;border:1px solid #b8babc"></div>
 <div class="a" style="left:752px;top:6px;width:16px;height:16px;border-radius:50%;background:#b8c4d0"></div>
 <svg style="left:754px;top:8px" width="12" height="14" viewBox="0 0 16 18"><path d="M8 1 L15 6 V17 H1 V6 Z" fill="#2a3a4a"/><path d="M3 8 L8 5 L13 8 V17 H3 Z" fill="#f7941d"/></svg>
 <div class="t" style="left:777px;top:8px;font-size:14px;color:#31363b">Untitled Document* - Pencil</div>
 <div class="a" style="left:980px;top:3px;width:228px;height:25px;background:#d9dbdd;border:1px solid #b8babc"></div>
 <svg style="left:985px;top:8px" width="13" height="13" viewBox="0 0 13 13"><rect x="0.75" y="0.75" width="11.5" height="11.5" fill="none" stroke="#1a8a6a" stroke-width="1.5"/><path d="M0.75 3 H12.25" stroke="#1a8a6a" stroke-width="1.5"/><path d="M5 5.5 L8.5 7.5 L5 9.5 Z" fill="#1a8a6a"/></svg>
 <div class="t" style="left:1008px;top:8px;width:196px;height:18px;overflow:hidden;font-size:13px;letter-spacing:-0.1px;color:#31363b;-webkit-mask-image:linear-gradient(90deg,#000 78%,rgba(0,0,0,0.15) 100%)">[DataSet1] — PSPPIRE Data Editor</div>
 <div class="t" style="left:1221px;top:10px;font-size:12px;font-weight:bold;color:#4a52a0">EN</div>
 <div class="a" style="left:1246px;top:4px;width:22px;height:22px;border-radius:50%;background:radial-gradient(circle at 40% 35%,#3aa0e8,#0a5aa8)"></div>
 <div class="t" style="left:1248px;top:8px;font-size:13px;font-weight:bold;font-style:italic;color:#fff;letter-spacing:-1px">hp</div>
 <svg style="left:1277px;top:7px" width="17" height="16" viewBox="0 0 17 16"><path d="M1 5 H4 L9 1 V15 L4 11 H1 Z" fill="#31363b"/><path d="M11 4 Q14 8 11 12 M13 2 Q17 8 13 14" fill="none" stroke="#31363b" stroke-width="1.2"/></svg>
 <svg style="left:1305px;top:6px" width="17" height="18" viewBox="0 0 17 18"><path d="M1 1 H5 V9 H1 Z M3 9 V14 M6 4 H16 V13 H6 M8 16 H14 M11 13 V16" fill="none" stroke="#31363b" stroke-width="1.3"/></svg>
 <svg style="left:1335px;top:10px" width="13" height="8" viewBox="0 0 13 8"><path d="M6.5 0 L13 8 H0 Z" fill="#31363b"/></svg>
 <div class="t" style="left:1357px;top:6px;font-size:19px;color:#31363b">1:02 PM</div>
 <svg style="left:1437px;top:9px" width="13" height="11" viewBox="0 0 13 11"><path d="M0 1 H13 M0 5.5 H13 M0 10 H13" stroke="#31363b" stroke-width="1.6"/></svg>
</div>

</body></html>
